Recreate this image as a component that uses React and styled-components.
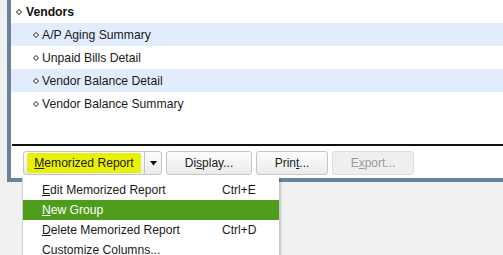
import React from 'react';
import styled, { createGlobalStyle } from 'styled-components';

const GlobalStyle = createGlobalStyle`
	html, body {
		margin: 0;
		padding: 0;
		background: #f0f0f0;
	}
	body {
		font-family: 'Liberation Sans', Arial, sans-serif;
		color: #1a1a1a;
	}
`;

const reports = [
	'A/P Aging Summary',
	'Unpaid Bills Detail',
	'Vendor Balance Detail',
	'Vendor Balance Summary',
];

const menuItems = [
	{ key: 'E', rest: 'dit Memorized Report', shortcut: 'Ctrl+E' },
	{ key: 'N', rest: 'ew Group', active: true },
	{ key: 'D', rest: 'elete Memorized Report', shortcut: 'Ctrl+D' },
	{ key: '', rest: 'Customize Columns...' },
];

const Diamond = () => (
	<DiamondIcon width='6' height='6' viewBox='0 0 6 6'>
		<path d='M3 0.5 L5.5 3 L3 5.5 L0.5 3 Z' fill='#fff' stroke='#111' strokeWidth='1' />
	</DiamondIcon>
);

const App = () => {
	return (
		<Page>
			<GlobalStyle />
			<Panel>
				<List>
					<GroupRow>
						<Diamond />
						<GroupTitle>Vendors</GroupTitle>
					</GroupRow>
					{reports.map((name, idx) => (
						<ReportRow key={name} shaded={idx % 2 === 0}>
							<Diamond />
							<span>{name}</span>
						</ReportRow>
					))}
				</List>
				<Divider />
				<ButtonBar>
					<SplitButton>
						<SplitMain>
							<Marker>
								<Key>M</Key>emorized Report
							</Marker>
						</SplitMain>
						<SplitArrow>
							<svg width='7' height='5' viewBox='0 0 7 5'>
								<path d='M0 0 H7 L3.5 4.5 Z' fill='#111' />
							</svg>
						</SplitArrow>
					</SplitButton>
					<Button width={86}>
						Di<Key>s</Key>play...
					</Button>
					<Button width={72}>
						Prin<Key>t</Key>...
					</Button>
					<Button width={82} disabled>
						E<Key>x</Key>port...
					</Button>
				</ButtonBar>
			</Panel>
			<Menu>
				{menuItems.map((item) => (
					<MenuItem key={item.rest} active={item.active}>
						<span>
							{item.key && <Key>{item.key}</Key>}
							{item.rest}
						</span>
						{item.shortcut && <Shortcut>{item.shortcut}</Shortcut>}
					</MenuItem>
				))}
			</Menu>
		</Page>
	);
};

export default App;

const Page = styled.div`
	width: 503px;
	height: 255px;
	position: relative;
	overflow: hidden;
	background: #f0f0f0;
`;
const Panel = styled.div`
	margin-left: 7px;
	height: 178px;
	background: #fff;
	border-left: 4px solid #6a8399;
	border-bottom: 4px solid #6a8399;
	display: flex;
	flex-direction: column;
`;
const List = styled.div`
	height: 144px;
	display: flex;
	flex-direction: column;
`;
const DiamondIcon = styled.svg`
	flex: none;
	margin-right: 3px;
`;
const GroupRow = styled.div`
	height: 23px;
	display: flex;
	align-items: center;
	padding-left: 5px;
`;
const GroupTitle = styled.span`
	font-size: 12.2px;
	font-weight: bold;
	color: #111;
	margin-left: 1px;
`;
const ReportRow = styled.div`
	height: 23px;
	display: flex;
	align-items: center;
	padding-left: 22px;
	font-size: 12.2px;
	color: #1a1a1a;
	background: ${(props) => (props.shaded ? '#e1edfd' : '#fff')};
`;
const Divider = styled.div`
	height: 2px;
	background: #111;
	margin-left: 1px;
`;
const ButtonBar = styled.div`
	display: flex;
	align-items: center;
	gap: 4px;
	padding: 5px 0 0 12px;
`;
const Key = styled.u`
	text-decoration: underline;
	text-underline-offset: 1px;
`;
const SplitButton = styled.div`
	display: flex;
	height: 24px;
	box-sizing: border-box;
	border: 1px solid #c6c6c6;
	border-radius: 3px;
	background: linear-gradient(#fdfdfd, #ebebeb);
`;
const SplitMain = styled.div`
	width: 120px;
	display: flex;
	align-items: center;
	justify-content: center;
	border-right: 1px solid #c6c6c6;
`;
const Marker = styled.span`
	font-size: 12.1px;
	color: #222;
	background: #e7ef0b;
	padding: 3px 7px 3px 7px;
	border-radius: 2px;
`;
const SplitArrow = styled.div`
	width: 16px;
	display: flex;
	align-items: center;
	justify-content: center;
`;
const Button = styled.div`
	width: ${(props) => props.width}px;
	height: 24px;
	box-sizing: border-box;
	display: flex;
	align-items: center;
	justify-content: center;
	font-size: 12px;
	border-radius: 3px;
	border: 1px solid ${(props) => (props.disabled ? '#dedede' : '#c6c6c6')};
	color: ${(props) => (props.disabled ? '#9a9a9a' : '#222')};
	background: ${(props) =>
		props.disabled ? '#efefef' : 'linear-gradient(#fdfdfd, #ebebeb)'};
`;
const Menu = styled.div`
	position: absolute;
	left: 22px;
	top: 177px;
	width: 257px;
	box-sizing: border-box;
	padding-top: 3px;
	background: #fff;
	border-left: 1px solid #d0d0d0;
	box-shadow: 3px 0 2px -1px rgba(0, 0, 0, 0.18);
	z-index: 2;
`;
const MenuItem = styled.div`
	height: 20px;
	display: flex;
	align-items: center;
	justify-content: space-between;
	padding: 0 0 0 19px;
	font-size: 12.1px;
	color: ${(props) => (props.active ? '#fff' : '#1a1a1a')};
	background: ${(props) => (props.active ? '#4f9d1c' : 'transparent')};
`;
const Shortcut = styled.span`
	width: 57px;
`;
